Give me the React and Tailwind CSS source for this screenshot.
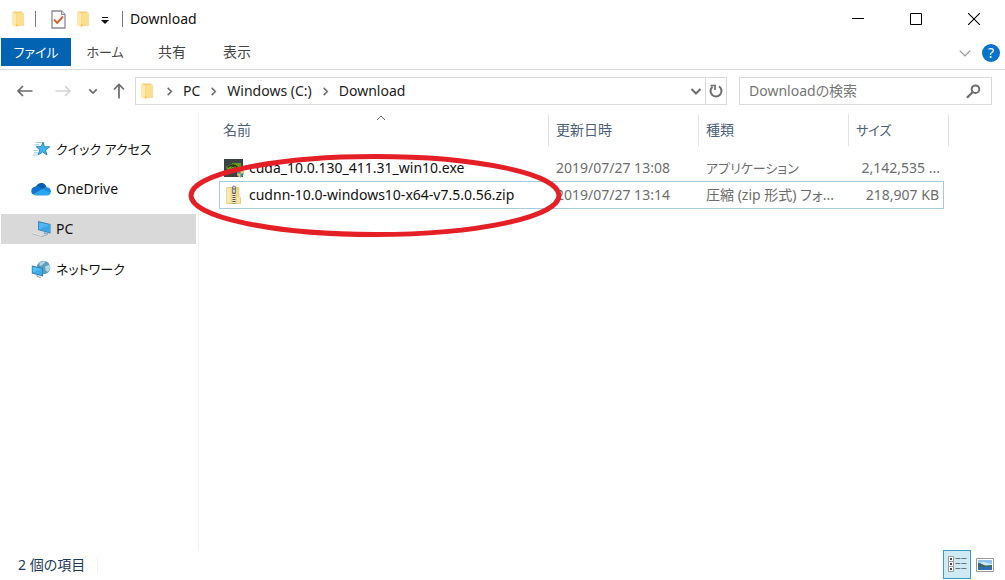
import React from "react";

function Folder() {
  return (
    <svg width="13" height="18" viewBox="0 0 13 18" aria-hidden="true">
      <path d="M1 1.500h9.500v1.500H12v12.500l-7 .5H1z" fill="#f3cf74" />
      <path d="M4.500 3H12v12.500H4.500z" fill="#fbdf8c" />
      <path d="M0 1.500l4.200 2.200V17L0 15.200z" fill="#fdeab0" />
      <path d="M4.200 13l1.800 2.700-1.800 1.300z" fill="#f0c557" />
    </svg>
  );
}

function PageCheck() {
  return (
    <svg width="15" height="19" viewBox="0 0 15 19" aria-hidden="true">
      <path d="M1 1h9.500L14 4.500V18H1z" fill="#fbfbfd" stroke="#8a8b92" strokeWidth="1.300" />
      <path d="M10.500 1v3.500H14" fill="#dcdde2" stroke="#8a8b92" />
      <path d="M3 9.500l3.200 3.300L12 6.500" fill="none" stroke="#dc5a30" strokeWidth="1.900" />
    </svg>
  );
}

function Chevron({ d, size = 12, color = "#6e6e6e", width = 2 }) {
  return (
    <svg width={size} height={size} viewBox="0 0 12 12" fill="none" stroke={color} strokeWidth={width} aria-hidden="true">
      <path d={d} />
    </svg>
  );
}

const DOWN = "M1.500 4l4.500 4.500L10.500 4";
const RIGHT = "M4 2l4 4-4 4";

function Arrow({ color = "#6a6a6a", d }) {
  return (
    <svg width="18" height="18" viewBox="0 0 18 18" fill="none" stroke={color} strokeWidth="1.700" aria-hidden="true">
      <path d={d} />
    </svg>
  );
}

function StarIcon() {
  return (
    <svg width="20" height="18" viewBox="0 0 20 18" aria-hidden="true">
      <path d="M4.500 2.500h6M3.500 4.800h5M2.500 10.500h4M3 12.800h4M2 15h4" stroke="#9cc9e6" strokeWidth="1" />
      <path d="M12 2l1.500 4.700 5.300.1-4.300 3.200 1.500 5-4.400-3-4.700 3 2-5-3.700-3.300 5-.1z" fill="#43b4f0" stroke="#2383c0" strokeWidth=".9" />
    </svg>
  );
}

function CloudIcon() {
  return (
    <svg width="20" height="14" viewBox="0 0 20 14" aria-hidden="true">
      <path d="M5 4.500C6.500 1 11 0 14 2.500c1 .8 1.500 2 1.700 2.800L10 9 3 8z" fill="#0a5cb0" />
      <path d="M4.500 4.500C6 4 7.500 4.300 8.700 5L13 8 2 12.600C-1 10 0 5 4.500 4.500z" fill="#1273cd" />
      <path d="M11.500 7c1.500-1.500 3-2 4.500-1.700 3 .2 4.500 3 3.700 5.300L17 12z" fill="#1b8be0" />
      <path d="M2 12.300L11.500 7l8.200 4c-.5 1.400-1.700 2.500-3.700 2.500H4.500c-1 0-2-.5-2.500-1.200z" fill="#2ba6ee" />
    </svg>
  );
}

function PcIcon() {
  return (
    <svg width="20" height="18" viewBox="0 0 20 18" aria-hidden="true">
      <path d="M7 1l12.500 3v9.500L7 10z" fill="#3a7fae" />
      <path d="M7.800 2.200l11 2.600v7.400l-11-2.900z" fill="#4cb9f5" />
      <path d="M7.800 9.300l11-4.500v7.400z" fill="#38a5e8" />
      <path d="M13 12v2l4 1v-2" fill="#8fb2c8" />
      <path d="M1 13.500l10 3 4.500-1.500" fill="none" stroke="#a9b4bc" strokeWidth="1.100" />
      <path d="M1 12.700l10 3" fill="none" stroke="#eef2f4" strokeWidth=".7" />
    </svg>
  );
}

function NetworkIcon() {
  return (
    <svg width="20" height="18" viewBox="0 0 20 18" aria-hidden="true">
      <circle cx="12.500" cy="7.500" r="6.800" fill="#5f9dbd" />
      <path d="M8 3.500c2-2.500 4.500-2.700 6.500-2-.5 2-2.500 2-3 3.500L9 6zM14 6.500l4.500-2c1.200 3 .5 5.500-2 7.500l-2-2z" fill="#add5e4" />
      <path d="M.8 5.500L12 8v8.500L.8 13.500z" fill="#2f7db0" />
      <path d="M1.600 6.700l9.500 2.100v6.300l-9.500-2.500z" fill="#55bff8" />
      <path d="M1.600 12.600l9.500-3.800v6.300z" fill="#3eacea" />
      <path d="M6 15v1.500l4 1" fill="none" stroke="#7b9db3" />
    </svg>
  );
}

function NvidiaIcon() {
  return (
    <svg width="20" height="19" viewBox="0 0 20 19" aria-hidden="true">
      <rect x="0" y="0" width="19" height="18" fill="#3d4245" />
      <path d="M8 4h9v9H8z" fill="#5f9a1b" />
      <path d="M2 8.500C4.500 5 11 3.500 16 8.500c-3 4.500-9 6-12 3z" fill="#6cab1d" />
      <path d="M3.500 8.500C6 5.500 10.500 5 13.500 8.200c-2 3.500-6 4.200-8 1.800" fill="none" stroke="#263018" strokeWidth="1.300" />
      <path d="M7 8.500c1-1.500 3-1.500 4 0-1 1.500-2 1.800-3 1" fill="none" stroke="#263018" />
      <path d="M13 11.500l3.500-1 3 1v3c0 2-1 3-3 4-2.500-1-3.500-2-3.500-4z" fill="#3c89c5" />
      <path d="M16.500 10.500l3 1V14.500h-3zM13 14.500h3.500v4c-2.500-1-3.500-2-3.500-4z" fill="#e9c44f" />
    </svg>
  );
}

function ZipIcon() {
  return (
    <svg width="16" height="20" viewBox="0 0 16 20" aria-hidden="true">
      <path d="M.8 2.500h12v9l1.700 1V18.500H.8z" fill="#f5d782" stroke="#e2c26c" strokeWidth=".8" />
      <path d="M1 2.700l3.500 1v14.300H1z" fill="#fdeab2" />
      <path d="M11 12h3.200v6.300H11z" fill="#fbe6a5" />
      <path d="M6.500 4h3v14.500h-3z" fill="#ececec" />
      <path d="M8 8v10.500" stroke="#4f4f4f" strokeWidth="3" strokeDasharray="1 1" />
      <path d="M6.500 2c0-1.300 3-1.300 3 0v6h-3z" fill="#d9dadb" stroke="#707070" strokeWidth=".9" />
      <path d="M8 3v2" stroke="#555" />
    </svg>
  );
}

const places = [
  { label: "クイック アクセス", Icon: StarIcon, kana: true },
  { label: "OneDrive", Icon: CloudIcon },
  { label: "PC", Icon: PcIcon, current: true },
  { label: "ネットワーク", Icon: NetworkIcon, kana: true },
];

const crumbs = ["PC", "Windows (C:)", "Download"];

function TitleBar() {
  return (
    <header className="flex h-[38px] items-center pl-3">
      <Folder />
      <span className="ml-[10px] h-4 w-px bg-[#777]" />
      <button aria-label="プロパティ" className="ml-[15px]"><PageCheck /></button>
      <button aria-label="新しいフォルダー" className="ml-[11px]"><Folder /></button>
      <button aria-label="カスタマイズ" className="ml-[11px] pt-1">
        <svg width="8" height="8" viewBox="0 0 8 8" aria-hidden="true">
          <path d="M1 0h6v1H1zM0 3h8L4 7z" fill="#111" />
        </svg>
      </button>
      <span className="ml-[13px] h-4 w-px bg-[#777]" />
      <h1 className="ml-[7px] text-[#111]">Download</h1>
      <div className="ml-auto flex h-full items-center gap-3 pr-2">
        <button aria-label="最小化" className="flex h-full w-[46px] items-center justify-center">
          <svg width="12" height="12" viewBox="0 0 12 12" stroke="#000" aria-hidden="true"><path d="M0 5.500h12" /></svg>
        </button>
        <button aria-label="最大化" className="flex h-full w-[46px] items-center justify-center">
          <svg width="12" height="12" viewBox="0 0 12 12" fill="none" stroke="#000" aria-hidden="true"><path d="M.5.5h11v11H.5z" /></svg>
        </button>
        <button aria-label="閉じる" className="flex h-full w-[46px] items-center justify-center">
          <svg width="12" height="12" viewBox="0 0 12 12" stroke="#000" strokeWidth="1.100" aria-hidden="true"><path d="M0 0l12 12M12 0L0 12" /></svg>
        </button>
      </div>
    </header>
  );
}

function Ribbon() {
  return (
    <div className="flex h-8 items-start border-b border-[#dadbdc] pl-px text-[#444]">
      <button className="h-7 w-[70px] bg-[#0263b2] text-[13px] text-white">ファイル</button>
      <button className="h-7 w-[68px] text-[13px]">ホーム</button>
      <button className="h-7 w-[66px]">共有</button>
      <button className="h-7 w-[64px]">表示</button>
      <div className="ml-auto flex h-[30px] items-center gap-[10px] pr-[5px]">
        <button aria-label="リボンの展開"><Chevron d={DOWN} size={14} color="#999" width={1.1} /></button>
        <button aria-label="ヘルプ" className="flex size-[18px] items-center justify-center rounded-full bg-[#0873cb] text-white">?</button>
      </div>
    </div>
  );
}

function AddressRow() {
  return (
    <div className="flex h-[42px] items-center pr-[13px] pl-4">
      <button aria-label="戻る"><Arrow d="M16.500 9H2M7 4L2 9l5 5" /></button>
      <button aria-label="進む" className="ml-5"><Arrow color="#d4d4d4" d="M1.500 9H16M11 4l5 5-5 5" /></button>
      <button aria-label="最近の場所" className="ml-4"><Chevron d={DOWN} size={10} /></button>
      <button aria-label="上へ" className="ml-3"><Arrow d="M9 16.500V2.500M4 7.500l5-5 5 5" /></button>
      <div className="ml-[7px] flex h-7 flex-1 items-center border border-[#d9d9d9] pl-[5px]">
        <Folder />
        <nav aria-label="パス" className="ml-[7px] flex items-center text-[#222]">
          {crumbs.map((c) => (
            <span key={c} className="flex items-center">
              <span className="mx-[3px] flex"><Chevron d={RIGHT} size={11} width={1.7} /></span>
              <a href="#" className="mx-[5px]">{c}</a>
            </span>
          ))}
        </nav>
        <button aria-label="履歴" className="mr-[3px] ml-auto"><Chevron d={DOWN} size={12} /></button>
        <button aria-label="更新" className="flex h-full w-[21px] items-center justify-center border-l border-[#d9d9d9]">
          <svg width="16" height="16" viewBox="0 0 16 16" fill="none" stroke="#6e6e6e" strokeWidth="2" aria-hidden="true">
            <path d="M11 3.300a5.500 5.500 0 1 1-6.500.4" />
            <path d="M2.500 2.500H7V7" strokeWidth="1.700" />
          </svg>
        </button>
      </div>
      <div className="ml-3 flex h-7 w-[253px] items-center border border-[#d9d9d9] pr-[10px] pl-[9px]">
        <input aria-label="Downloadの検索" placeholder="Downloadの検索" className="min-w-0 flex-1 outline-none placeholder:text-[#757575]" />
        <svg width="15" height="15" viewBox="0 0 15 15" fill="none" stroke="#6e6e6e" strokeWidth="2" aria-hidden="true">
          <circle cx="9.500" cy="5.200" r="3.800" />
          <path d="M6.800 8L1 13.800" strokeWidth="2.300" />
        </svg>
      </div>
    </div>
  );
}

function FileTable() {
  return (
    <div className="relative pt-[2px] pl-5">
      <table className="w-[730px] table-fixed border-separate border-spacing-0 text-left">
        <colgroup>
          <col className="w-[330px]" />
          <col className="w-[150px]" />
          <col className="w-[150px]" />
          <col className="w-[95px]" />
          <col className="w-[5px]" />
        </colgroup>
        <thead className="text-[#4c607a]">
          <tr className="h-8">
            <th aria-sort="ascending" className="relative border-r border-[#e3e3e3] p-0 pl-1 font-normal">
              <button>名前</button>
              <span className="absolute top-0 left-1/2 -translate-x-2">
                <svg width="10" height="8" viewBox="0 0 10 8" fill="none" stroke="#666" aria-hidden="true"><path d="M1 6l4-4 4 4" /></svg>
              </span>
            </th>
            <th className="border-r border-[#e3e3e3] p-0 pl-[7px] font-normal"><button>更新日時</button></th>
            <th className="border-r border-[#e3e3e3] p-0 pl-[7px] font-normal"><button>種類</button></th>
            <th colSpan={2} className="border-r border-[#e3e3e3] p-0 pl-[7px] text-[13px] font-normal"><button>サイズ</button></th>
          </tr>
        </thead>
        <tbody className="text-[#6d6d6d]">
          <tr className="h-[35px] align-bottom">
            <td className="p-0 pl-[5px] text-[#111]">
              <span className="flex h-[26px] items-center"><span className="flex w-[25px]"><NvidiaIcon /></span>cuda_10.0.130_411.31_win10.exe</span>
            </td>
            <td className="p-0 pl-[7px] leading-[26px]">2019/07/27 13:08</td>
            <td className="p-0 pl-[7px] text-[13px] leading-[26px]">アプリケーション</td>
            <td className="p-0 pr-1 text-right leading-[26px]">2,142,535 ...</td>
          </tr>
          <tr className="h-7">
            <td className="border-y border-l border-[#a5cbe0] p-0 pl-1 text-[#111]">
              <span className="flex items-center"><span className="flex w-[25px] pl-[2px]"><ZipIcon /></span>cudnn-10.0-windows10-x64-v7.5.0.56.zip</span>
            </td>
            <td className="border-y border-[#a5cbe0] p-0 pl-[7px]">2019/07/27 13:14</td>
            <td className="border-y border-[#a5cbe0] p-0 pl-[7px]">圧縮 (zip 形式) フォ...</td>
            <td className="border-y border-r border-[#a5cbe0] p-0 pr-1 text-right">218,907 KB</td>
          </tr>
        </tbody>
      </table>
      <svg className="pointer-events-none absolute top-10 -left-3" width="378" height="88" viewBox="0 0 378 88" fill="none" aria-hidden="true">
        <ellipse cx="188" cy="43.500" rx="184" ry="39" stroke="#e51f26" strokeWidth="5" />
      </svg>
    </div>
  );
}

function StatusBar() {
  return (
    <footer className="flex h-[30px] items-start pr-[11px] pl-[18px] text-[#1e395b]">
      <div className="flex h-[29px] items-center">
        <span>2 個の項目</span>
        <span className="ml-3 h-4 w-px bg-[#f0f0f0]" />
      </div>
      <div className="ml-auto flex items-center">
        <button aria-label="詳細" className="flex h-[29px] w-7 items-center justify-center border border-[#3a9cba] bg-[#cfe9f5]">
          <svg width="19" height="17" viewBox="0 0 19 17" fill="none" aria-hidden="true">
            <path d="M.5.5h5v5h-5zM.5 5.500h5v5h-5zM.5 10.500h5v5h-5z" fill="#fff" stroke="#9a9a9a" />
            <path d="M2 2h2v2H2zM2 7h2v2H2zM2 12h2v2H2z" fill="#54443c" />
            <path d="M7.500 2.500h5M13.500 2.500h5M7.500 7.500h5M13.500 7.500h5M7.500 12.500h5M13.500 12.500h5" stroke="#66767c" />
          </svg>
        </button>
        <button aria-label="大きい縮小版" className="ml-[5px]">
          <svg width="18" height="14" viewBox="0 0 18 14" aria-hidden="true">
            <path d="M.5.5h17v13H.5z" fill="#fff" stroke="#999" />
            <path d="M2 2h14v10H2z" fill="#8fc4ef" />
            <path d="M2 5l5-1 9 2v2H2z" fill="#d4e8f3" />
            <path d="M2 5c3 0 5 2 8 2.500l6-.5v2H2z" fill="#36686a" />
            <path d="M2 9h14v3H2z" fill="#2f6fae" />
          </svg>
        </button>
      </div>
    </footer>
  );
}

export default function App() {
  return (
    <div className="flex min-h-screen flex-col bg-white font-['Noto_Sans','Noto_Sans_CJK_JP',sans-serif] text-[14px] leading-5 [font-feature-settings:'palt']">
      <TitleBar />
      <Ribbon />
      <AddressRow />
      <div className="flex flex-1">
        <nav aria-label="場所" className="w-[199px] border-r border-[#f0f0f0] pt-[22px] pr-[2px] pl-px">
          <ul className="flex flex-col gap-[10px]">
            {places.map(({ label, Icon, current, kana }) => (
              <li key={label} className={current ? "bg-[#d9d9d9]" : ""}>
                <a
                  href="#"
                  aria-current={current ? "page" : undefined}
                  className="flex h-[30px] items-center gap-[5px] pl-[30px] text-[#111]"
                >
                  <Icon />
                  <span className={kana ? "text-[13px]" : ""}>{label}</span>
                </a>
              </li>
            ))}
          </ul>
        </nav>
        <main className="flex-1">
          <FileTable />
        </main>
      </div>
      <StatusBar />
    </div>
  );
}
